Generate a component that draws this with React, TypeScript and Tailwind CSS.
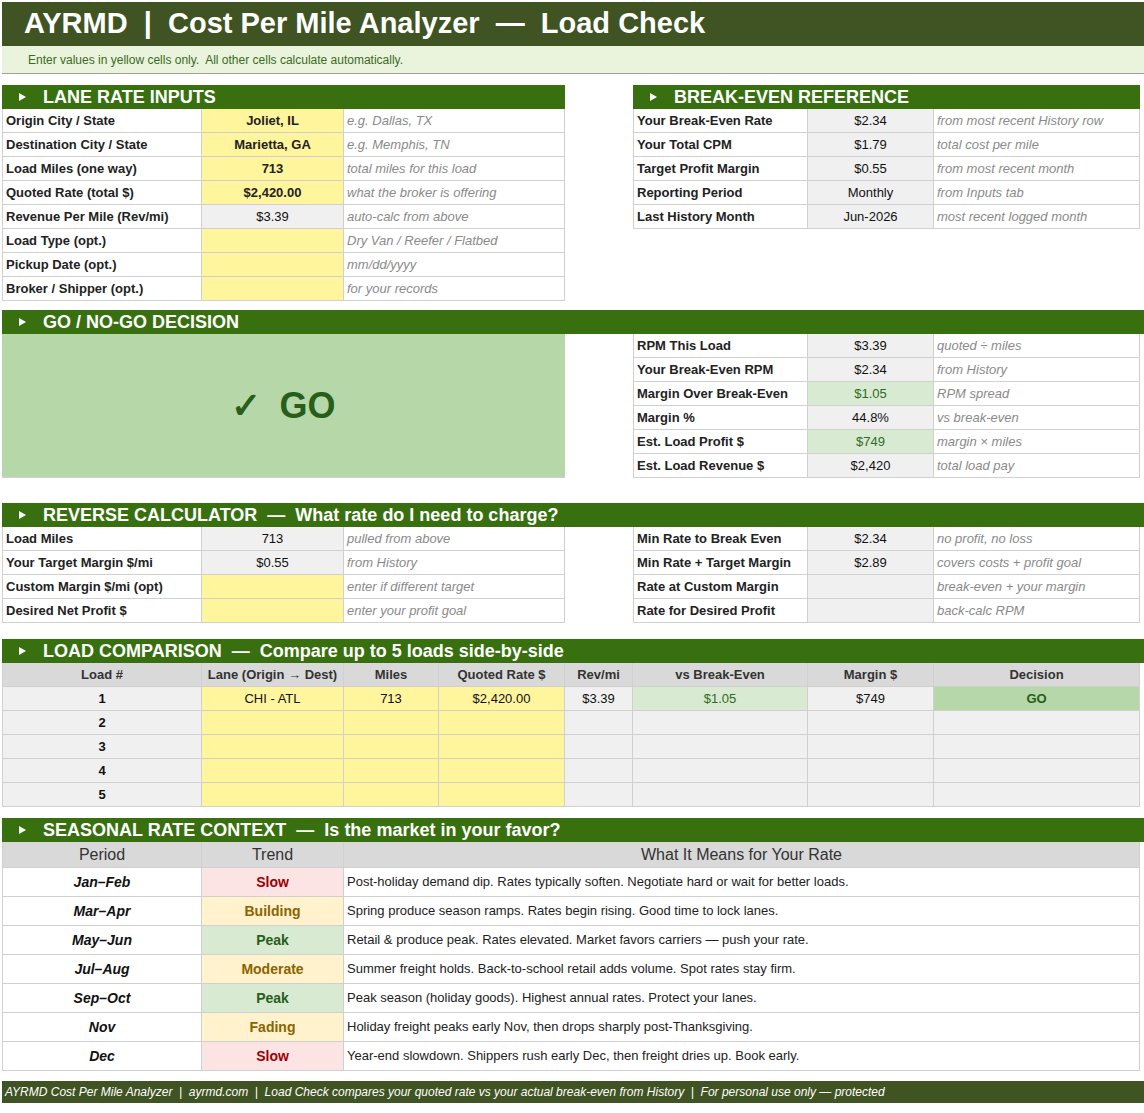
import React from "react";

type Cell = { w: number; c?: React.ReactNode; k?: string };

const B = "border-r border-b border-[#d0d0d0]";

function Row({ cells, h = 24 }: { cells: Cell[]; h?: number }) {
  return (
    <div className="flex" style={{ height: h }}>
      {cells.map((x, i) => (
        <div
          key={i}
          style={{ width: x.w }}
          className={`shrink-0 flex items-center overflow-hidden whitespace-nowrap ${x.k ?? ""}`}
        >
          {x.c}
        </div>
      ))}
    </div>
  );
}

const W = { A: 200, B: 142, C: 221, D: 68, E: 175, F: 126, G: 206 };
const lab = `${B} border-l px-[3px] font-bold text-[#222]`;
const labR = `${B} border-l px-[3px] font-bold text-[#222]`;
const yel = `${B} justify-center bg-[#fff59d] font-bold text-[#222]`;
const gry = `${B} justify-center bg-[#f0f0f0] text-[#111]`;
const grn = `${B} justify-center bg-[#d9ead3] text-[#2e6b1f]`;
const note = `${B} px-[3px] italic text-[#8a8a8a]`;

function Tri() {
  return (
    <svg width="7" height="8" viewBox="0 0 7 8" className="ml-[17px] mr-[17px]">
      <path d="M0 0 L7 4 L0 8 Z" fill="white" />
    </svg>
  );
}

function Header({ text, sub, split }: { text: string; sub?: string; split?: string }) {
  const inner = (t: string, s?: string) => (
    <div className="flex items-center h-full text-white font-bold text-[18px] whitespace-pre">
      <Tri />
      <span>{t}</span>
      {s && <span>{"  —  " + s}</span>}
    </div>
  );
  if (split)
    return (
      <div className="flex h-[24px]">
        <div className="w-[563px] bg-[#38700f]">{inner(text)}</div>
        <div className="w-[68px]" />
        <div className="w-[507px] bg-[#38700f]">{inner(split)}</div>
      </div>
    );
  return <div className="h-[24px] bg-[#38700f]">{inner(text, sub)}</div>;
}

const gap = (h: number) => <div style={{ height: h }} />;

const trendStyle: Record<string, string> = {
  Slow: "bg-[#fde4e4] text-[#9c0006]",
  Peak: "bg-[#d9ead3] text-[#275e1a]",
  Building: "bg-[#fff2cc] text-[#8a6400]",
  Moderate: "bg-[#fff2cc] text-[#8a6400]",
  Fading: "bg-[#fff2cc] text-[#8a6400]",
};

const seasons: [string, string, string][] = [
  ["Jan–Feb", "Slow", "Post-holiday demand dip. Rates typically soften. Negotiate hard or wait for better loads."],
  ["Mar–Apr", "Building", "Spring produce season ramps. Rates begin rising. Good time to lock lanes."],
  ["May–Jun", "Peak", "Retail & produce peak. Rates elevated. Market favors carriers — push your rate."],
  ["Jul–Aug", "Moderate", "Summer freight holds. Back-to-school retail adds volume. Spot rates stay firm."],
  ["Sep–Oct", "Peak", "Peak season (holiday goods). Highest annual rates. Protect your lanes."],
  ["Nov", "Fading", "Holiday freight peaks early Nov, then drops sharply post-Thanksgiving."],
  ["Dec", "Slow", "Year-end slowdown. Shippers rush early Dec, then freight dries up. Book early."],
];

export default function App() {
  const lane: [string, string, string, string][] = [
    ["Origin City / State", "Joliet, IL", "e.g.  Dallas, TX", yel],
    ["Destination City / State", "Marietta, GA", "e.g.  Memphis, TN", yel],
    ["Load Miles (one way)", "713", "total miles for this load", yel],
    ["Quoted Rate (total $)", "$2,420.00", "what the broker is offering", yel],
    ["Revenue Per Mile (Rev/mi)", "$3.39", "auto-calc from above", gry],
    ["Load Type (opt.)", "", "Dry Van / Reefer / Flatbed", yel],
    ["Pickup Date (opt.)", "", "mm/dd/yyyy", yel],
    ["Broker / Shipper (opt.)", "", "for your records", yel],
  ];
  const be: [string, string, string][] = [
    ["Your Break-Even Rate", "$2.34", "from most recent History row"],
    ["Your Total CPM", "$1.79", "total cost per mile"],
    ["Target Profit Margin", "$0.55", "from most recent month"],
    ["Reporting Period", "Monthly", "from Inputs tab"],
    ["Last History Month", "Jun-2026", "most recent logged month"],
  ];
  const go: [string, string, string, string][] = [
    ["RPM This Load", "$3.39", "quoted ÷ miles", gry],
    ["Your Break-Even RPM", "$2.34", "from History", gry],
    ["Margin Over Break-Even", "$1.05", "RPM spread", grn],
    ["Margin %", "44.8%", "vs break-even", gry],
    ["Est. Load Profit $", "$749", "margin × miles", grn],
    ["Est. Load Revenue $", "$2,420", "total load pay", gry],
  ];
  const rev: [string, string, string, string, string, string, string, string][] = [
    ["Load Miles", "713", "pulled from above", gry, "Min Rate to Break Even", "$2.34", "no profit, no loss", gry],
    ["Your Target Margin $/mi", "$0.55", "from History", gry, "Min Rate + Target Margin", "$2.89", "covers costs + profit goal", gry],
    ["Custom Margin $/mi (opt)", "", "enter if different target", yel, "Rate at Custom Margin", "", "break-even + your margin", gry],
    ["Desired Net Profit $", "", "enter your profit goal", yel, "Rate for Desired Profit", "", "back-calc RPM", gry],
  ];
  const hd = `${B} justify-center bg-[#d9d9d9] font-bold text-[#333]`;

  return (
    <div className="w-[1144px] h-[1113px] bg-white font-[Liberation_Sans] text-[13px] pl-[2px] overflow-hidden">
      <div className="h-[2px]" />
      <div className="h-[44px] bg-[#3f5323] text-white font-bold text-[29px] flex items-center pl-[22px] whitespace-pre">
        AYRMD  |  Cost Per Mile Analyzer  —  Load Check
      </div>
      <div className="h-[28px] bg-[#eaf3dc] border-b border-[#a0a0a0] text-[#3b6b1e] text-[12px] flex items-center pl-[26px] whitespace-pre">
        Enter values in yellow cells only.  All other cells calculate automatically.
      </div>
      {gap(11)}
      <Header text="LANE RATE INPUTS" split="BREAK-EVEN REFERENCE" />
      {lane.map((r, i) => (
        <Row
          key={i}
          cells={[
            { w: W.A, c: r[0], k: lab },
            { w: W.B, c: r[1], k: r[3] === gry ? gry : yel },
            { w: W.C, c: r[2], k: note },
            { w: W.D },
            ...(be[i]
              ? [
                  { w: W.E, c: be[i][0], k: labR },
                  { w: W.F, c: be[i][1], k: gry },
                  { w: W.G, c: be[i][2], k: note },
                ]
              : []),
          ]}
        />
      ))}
      {gap(9)}
      <Header text="GO / NO-GO DECISION" />
      <div className="flex h-[144px]">
        <div className="w-[563px] bg-[#b6d7a8] flex items-center justify-center gap-[18px] text-[#275e1a] font-bold text-[36px] border-b border-[#d0d0d0]">
          <span>✓</span>
          <span>GO</span>
        </div>
        <div className="w-[68px]" />
        <div>
          {go.map((r, i) => (
            <Row
              key={i}
              cells={[
                { w: W.E, c: r[0], k: labR },
                { w: W.F, c: r[1], k: r[3] },
                { w: W.G, c: r[2], k: note },
              ]}
            />
          ))}
        </div>
      </div>
      {gap(25)}
      <Header text="REVERSE CALCULATOR" sub="What rate do I need to charge?" />
      {rev.map((r, i) => (
        <Row
          key={i}
          cells={[
            { w: W.A, c: r[0], k: lab },
            { w: W.B, c: r[1], k: r[3] === yel ? yel : gry },
            { w: W.C, c: r[2], k: note },
            { w: W.D },
            { w: W.E, c: r[4], k: labR },
            { w: W.F, c: r[5], k: gry },
            { w: W.G, c: r[6], k: note },
          ]}
        />
      ))}
      {gap(16)}
      <Header text="LOAD COMPARISON" sub="Compare up to 5 loads side-by-side" />
      <Row
        cells={[
          { w: W.A, c: "Load #", k: hd + " border-l" },
          { w: W.B, c: "Lane (Origin → Dest)", k: hd },
          { w: 95, c: "Miles", k: hd },
          { w: 126, c: "Quoted Rate $", k: hd },
          { w: W.D, c: "Rev/mi", k: hd },
          { w: W.E, c: "vs Break-Even", k: hd },
          { w: W.F, c: "Margin $", k: hd },
          { w: W.G, c: "Decision", k: hd },
        ]}
      />
      {[1, 2, 3, 4, 5].map((n) => {
        const f = n === 1;
        const y = `${B} justify-center bg-[#fff59d] text-[#111]`;
        return (
          <Row
            key={n}
            cells={[
              { w: W.A, c: n, k: `${B} border-l justify-center bg-[#f0f0f0] font-bold text-[#111]` },
              { w: W.B, c: f ? "CHI - ATL" : "", k: y },
              { w: 95, c: f ? "713" : "", k: y },
              { w: 126, c: f ? "$2,420.00" : "", k: y },
              { w: W.D, c: f ? "$3.39" : "", k: gry },
              { w: W.E, c: f ? "$1.05" : "", k: f ? grn : gry },
              { w: W.F, c: f ? "$749" : "", k: gry },
              { w: W.G, c: f ? "GO" : "", k: f ? `${B} justify-center bg-[#b6d7a8] font-bold text-[#275e1a]` : gry },
            ]}
          />
        );
      })}
      {gap(11)}
      <Header text="SEASONAL RATE CONTEXT" sub="Is the market in your favor?" />
      <Row
        h={26}
        cells={[
          { w: W.A, c: "Period", k: hd + " border-l !font-normal text-[16px] text-[#222]" },
          { w: W.B, c: "Trend", k: hd + " !font-normal text-[16px] text-[#222]" },
          { w: 796, c: "What It Means for Your Rate", k: hd + " !font-normal text-[16px] text-[#222]" },
        ]}
      />
      {seasons.map((s) => (
        <Row
          key={s[0]}
          h={29}
          cells={[
            { w: W.A, c: s[0], k: `${B} border-l justify-center font-bold italic text-[14px] text-[#111]` },
            { w: W.B, c: s[1], k: `${B} justify-center font-bold text-[14px] ${trendStyle[s[1]]}` },
            { w: 796, c: s[2], k: `${B} px-[3px] text-[#222]` },
          ]}
        />
      ))}
      {gap(10)}
      <div className="h-[22px] bg-[#3f5323] text-white italic text-[12px] flex items-center pl-[3px] whitespace-pre">
        AYRMD Cost Per Mile Analyzer  |  ayrmd.com  |  Load Check compares your quoted rate vs your actual break-even from History  |  For personal use only — protected
      </div>
    </div>
  );
}
